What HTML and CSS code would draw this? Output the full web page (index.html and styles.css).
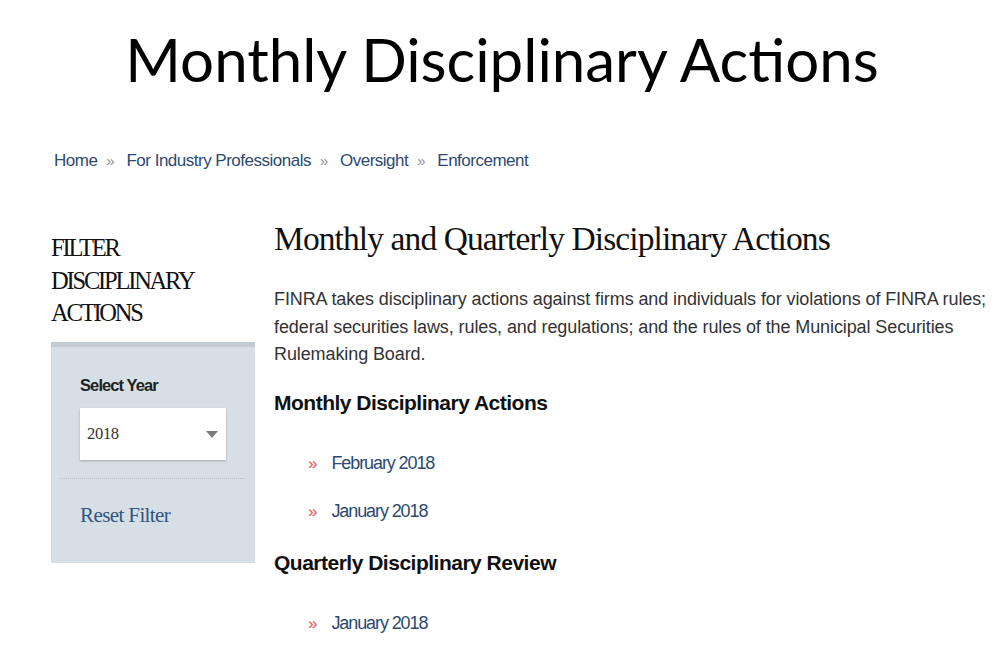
FILE: index.html
```html
<!DOCTYPE html>
<html>
<head>
<meta charset="utf-8">
<link rel="stylesheet" href="styles.css">
</head>
<body>
<h1 class="slide-title">Monthly Disciplinary Actions</h1>
<nav class="crumbs">
  <a href="#">Home</a><span class="sep">»</span>
  <a href="#">For Industry Professionals</a><span class="sep">»</span>
  <a href="#">Oversight</a><span class="sep">»</span>
  <a href="#">Enforcement</a>
</nav>
<div class="layout">
  <aside class="side">
    <h2 class="side-title">FILTER DISCIPLINARY ACTIONS</h2>
    <div class="panel">
      <div class="label">Select Year</div>
      <div class="select"><span>2018</span><span class="tri"></span></div>
      <div class="dots"></div>
      <a class="reset" href="#">Reset Filter</a>
    </div>
  </aside>
  <main class="main">
    <h2 class="page-title">Monthly and Quarterly Disciplinary Actions</h2>
    <p class="intro">FINRA takes disciplinary actions against firms and individuals for violations of FINRA rules; federal securities laws, rules, and regulations; and the rules of the Municipal Securities Rulemaking Board.</p>
    <h3 class="sec">Monthly Disciplinary Actions</h3>
    <ul class="links">
      <li><span class="chev">»</span><a href="#">February 2018</a></li>
      <li><span class="chev">»</span><a href="#">January 2018</a></li>
    </ul>
    <h3 class="sec sec-second">Quarterly Disciplinary Review</h3>
    <ul class="links">
      <li><span class="chev">»</span><a href="#">January 2018</a></li>
    </ul>
  </main>
</div>
</body>
</html>
```
FILE: styles.css
```css
html, body { margin: 0; padding: 0; background: #fff; }
body { width: 1004px; height: 662px; overflow: hidden; font-family: "Liberation Sans", Arial, sans-serif; }
a { text-decoration: none; }
.slide-title {
  margin: 0; padding-top: 20px; height: 78px;
  text-align: center; font-family: Lato, "Open Sans", sans-serif; font-weight: 400;
  font-size: 60px; line-height: 78px; color: #000;
}
.crumbs {
  margin: 51px 0 0 54px; font-size: 17px; line-height: 24px; letter-spacing: -0.5px;
}
.crumbs a { color: #2c4a72; }
.crumbs .sep { color: #8a8f96; margin: 0 8px 0 9px; font-size: 15px; }
.layout { display: flex; margin-top: 46px; padding-left: 51px; gap: 19px; }
.side { width: 204px; flex: none; }
.side-title {
  margin: 13px 0 0 0; font-family: "Liberation Serif", serif; font-weight: 400;
  font-size: 24.5px; line-height: 32.5px; color: #111; letter-spacing: -2.2px; width: 160px;
}
.panel {
  margin-top: 12px; background: #d6dfe6; border-top: 5px solid #c3cbd1;
  height: 216px;
}
.label { padding: 28px 0 0 29px; font-weight: 700; font-size: 16.5px; line-height: 20px; color: #222; letter-spacing: -0.9px; }
.select {
  margin: 13px 0 0 29px; width: 146px; height: 52px; background: #fff;
  box-shadow: 0 1px 2px rgba(0,0,0,0.25); display: flex; align-items: center;
  justify-content: space-between; padding: 0 8px 0 7px; box-sizing: border-box;
  font-family: "Liberation Serif", serif; font-size: 16.5px; color: #333; letter-spacing: -0.3px;
}
.tri { width: 0; height: 0; border-left: 6px solid transparent; border-right: 6px solid transparent; border-top: 7px solid #7a7a7a; margin-top: 2px; }
.dots { margin: 18px 10px 0 9px; border-top: 1px dotted #b9c1c8; }
.reset { display: block; padding: 24px 0 0 29px; font-family: "Liberation Serif", serif; font-size: 21px; color: #2f5684; letter-spacing: -0.6px; }
.main { flex: 1; }
.page-title {
  margin: 0; font-family: "Liberation Serif", serif; font-weight: 400; font-size: 33.5px; line-height: 40px;
  color: #111; letter-spacing: -0.9px;
}
.intro { margin: 27px 0 0 0; font-size: 18px; line-height: 27.5px; color: #333; letter-spacing: -0.1px; }
.sec { margin: 21px 0 0 0; font-size: 21px; line-height: 26px; font-weight: 700; color: #111; letter-spacing: -0.5px; }
.sec-second { margin-top: 25px; }
.links { list-style: none; margin: 0; padding: 0 0 0 34px; }
.links li { margin-top: 21px; font-size: 18px; line-height: 26px; letter-spacing: -1.1px; }
.links li:first-child { margin-top: 34px; }
.chev { color: #e5514e; font-size: 17px; margin-right: 14px; letter-spacing: 0; }
.links a { color: #2c4a72; }
```
